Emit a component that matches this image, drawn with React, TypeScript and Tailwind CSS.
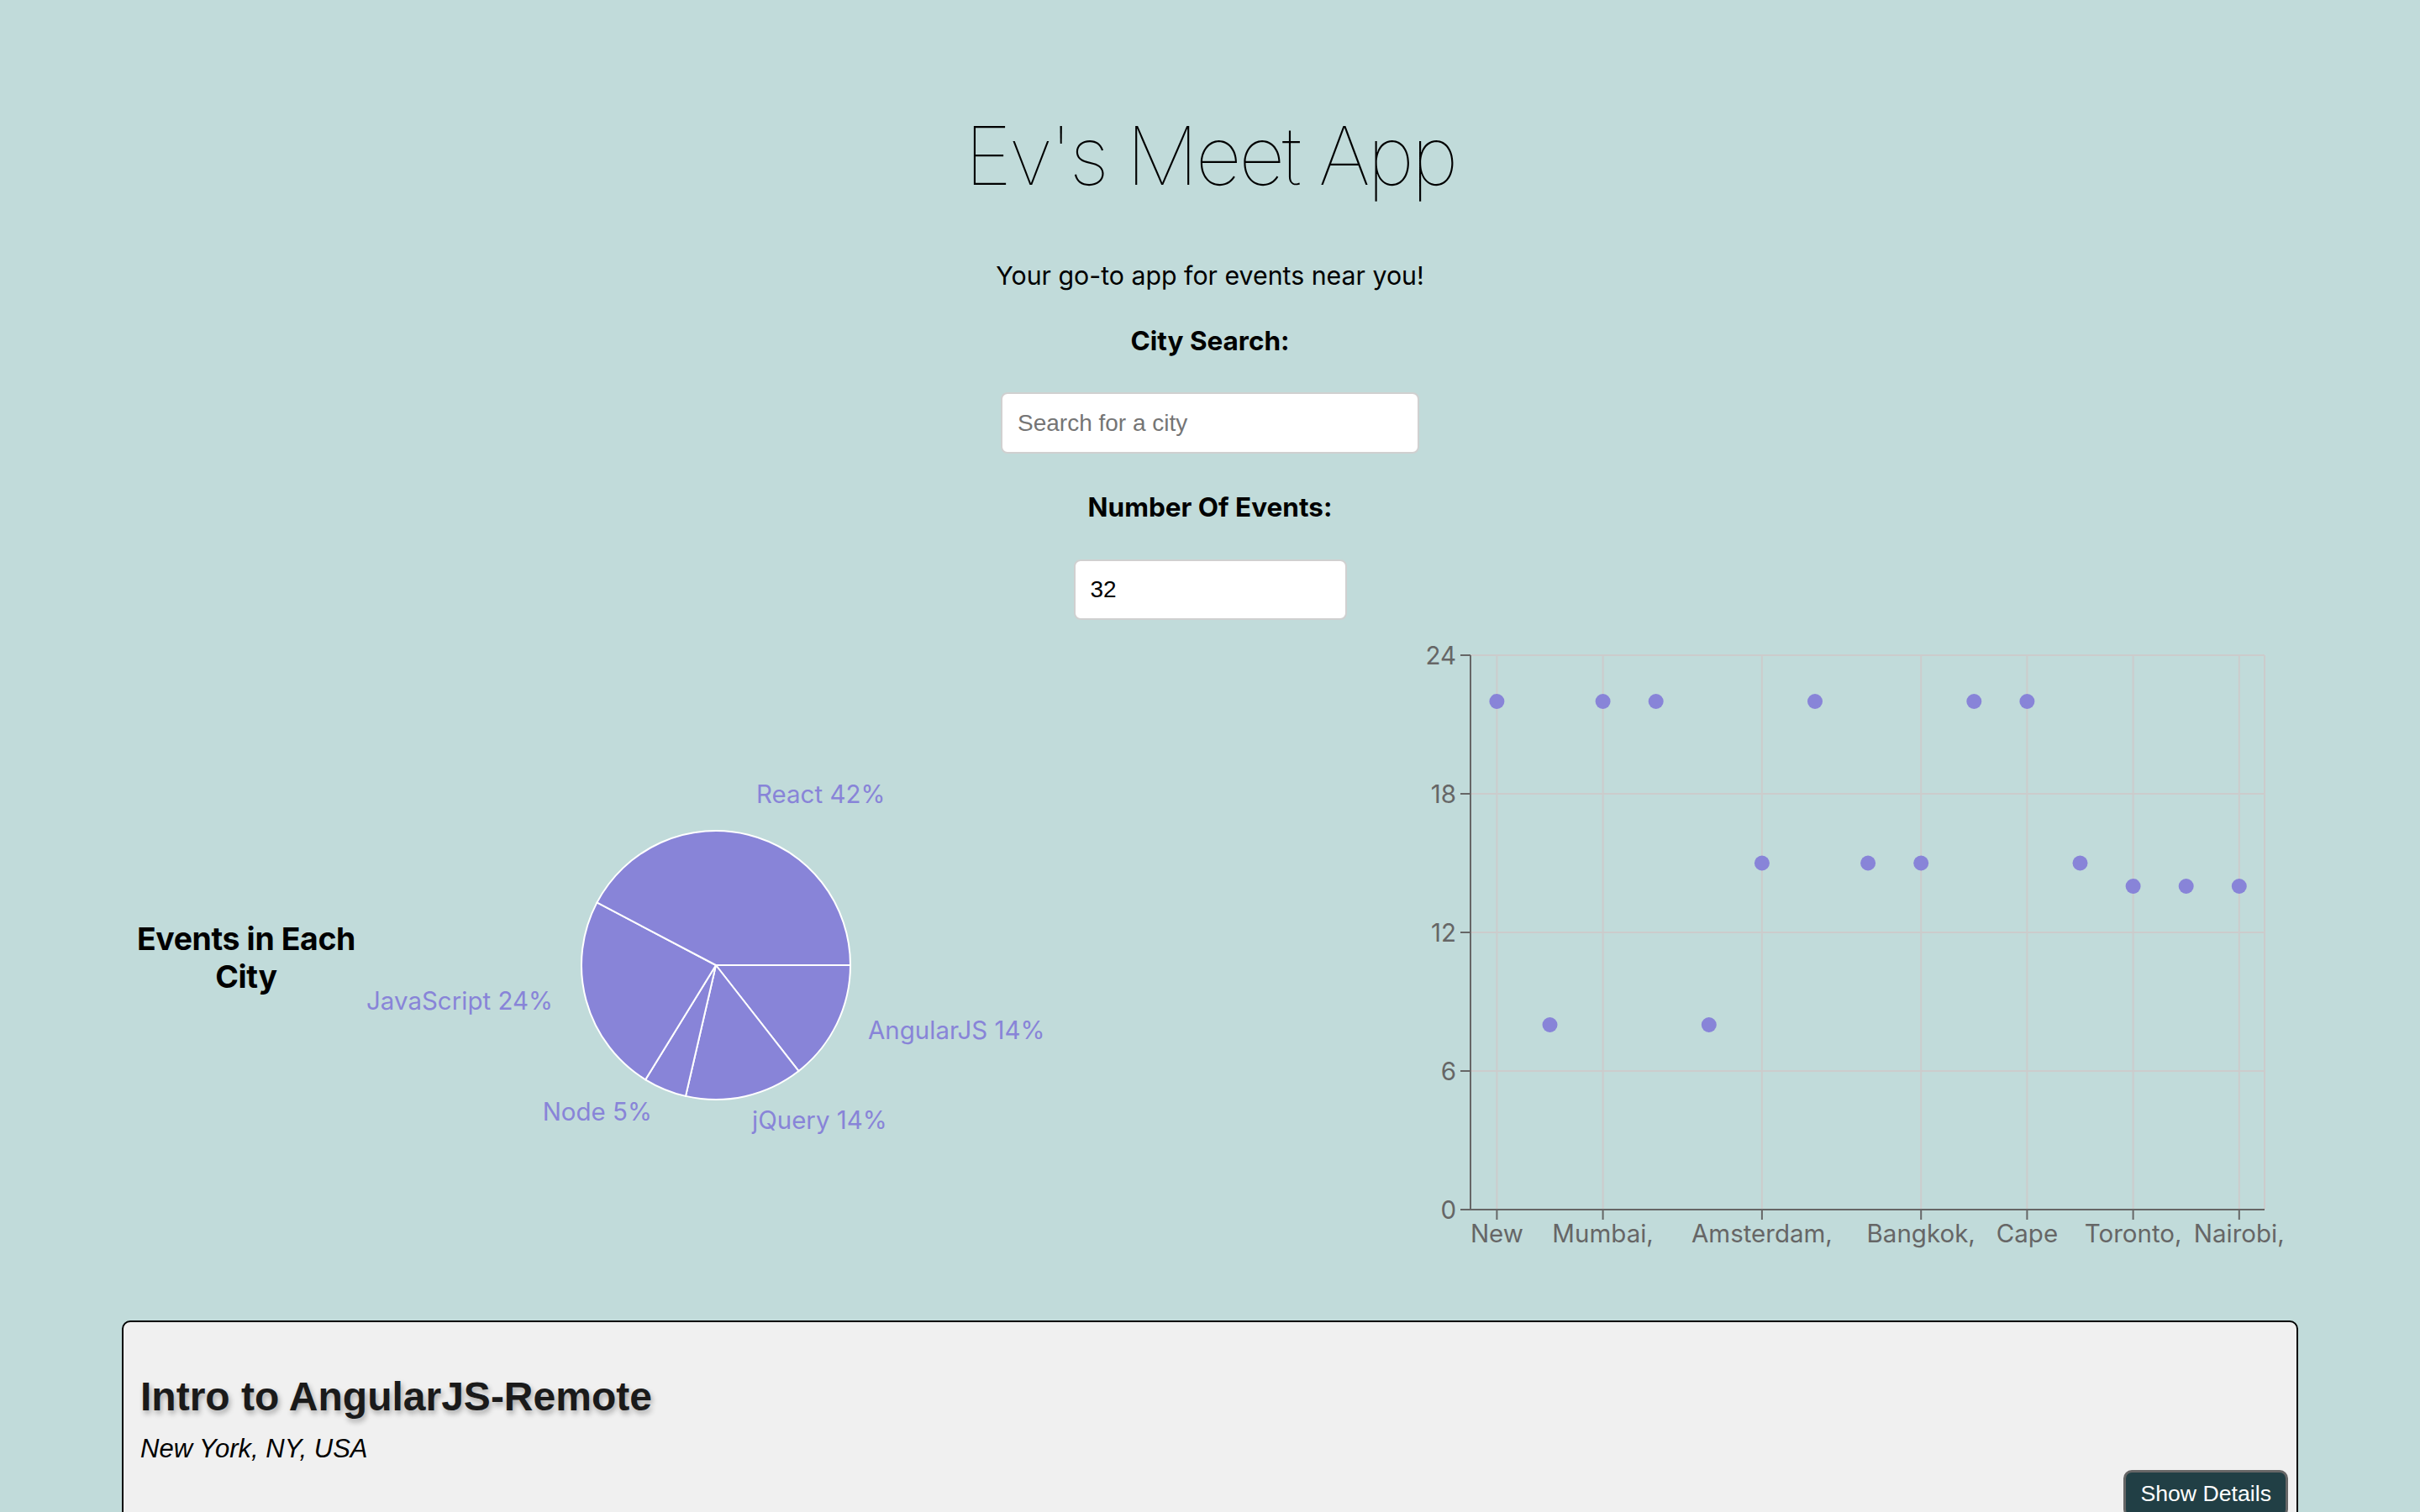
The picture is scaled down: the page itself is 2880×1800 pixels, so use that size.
import React from "react";

const PIE_CX = 411;
const PIE_CY = 389;
const PIE_R = 160;

function pt(a: number, r: number) {
  const rad = (a * Math.PI) / 180;
  return [PIE_CX + r * Math.cos(rad), PIE_CY + r * Math.sin(rad)];
}

function slicePath(a0: number, a1: number) {
  const [x0, y0] = pt(a0, PIE_R);
  const [x1, y1] = pt(a1, PIE_R);
  const large = a1 - a0 > 180 ? 1 : 0;
  return `M ${PIE_CX} ${PIE_CY} L ${x0} ${y0} A ${PIE_R} ${PIE_R} 0 ${large} 1 ${x1} ${y1} Z`;
}

const slices: [number, number][] = [
  [0, 52],
  [52, 103],
  [103, 121.6],
  [121.6, 207.8],
  [207.8, 360],
];

const pieLabels = [
  { text: "React 42%", x: 459, y: 196, anchor: "start" },
  { text: "JavaScript 24%", x: 217, y: 442, anchor: "end" },
  { text: "AngularJS 14%", x: 592, y: 477, anchor: "start" },
  { text: "Node 5%", x: 335, y: 574, anchor: "end" },
  { text: "jQuery 14%", x: 454, y: 584, anchor: "start" },
];

const values = [22, 8, 22, 22, 8, 15, 22, 15, 15, 22, 22, 15, 14, 14, 14];
const xTicks: [number, string][] = [
  [0, "New"],
  [2, "Mumbai,"],
  [5, "Amsterdam,"],
  [8, "Bangkok,"],
  [10, "Cape"],
  [12, "Toronto,"],
  [14, "Nairobi,"],
];

const AX_X = 160;
const TOP = 20;
const BOTTOM = 680;
const RIGHT = 1105;
const px = (i: number) => 191.4 + 63.1 * i;
const py = (v: number) => BOTTOM - (v * (BOTTOM - TOP)) / 24;

function PieChartSvg() {
  return (
    <svg width={1000} height={780} className="shrink-0 overflow-visible">
      {slices.map(([a0, a1], i) => (
        <path key={i} d={slicePath(a0, a1)} fill="#8884d8" stroke="#ffffff" strokeWidth={2} />
      ))}
      {pieLabels.map((l) => (
        <text
          key={l.text}
          x={l.x}
          y={l.y}
          textAnchor={l.anchor as "start" | "end"}
          fill="#8884d8"
          fontSize={29.5}
          fontFamily="Inter, sans-serif"
        >
          {l.text}
        </text>
      ))}
    </svg>
  );
}

function ScatterSvg() {
  const yTicks = [0, 6, 12, 18, 24];
  return (
    <svg width={1145} height={780} className="shrink-0 overflow-visible">
      {yTicks.map((v) => (
        <line key={"h" + v} x1={AX_X} x2={RIGHT} y1={py(v)} y2={py(v)} stroke="#cccccc" strokeWidth={2} />
      ))}
      {xTicks.map(([i]) => (
        <line key={"v" + i} x1={px(i)} x2={px(i)} y1={TOP} y2={BOTTOM} stroke="#cccccc" strokeWidth={2} />
      ))}
      <line x1={RIGHT} x2={RIGHT} y1={TOP} y2={BOTTOM} stroke="#cccccc" strokeWidth={2} />
      <line x1={AX_X} x2={AX_X} y1={TOP} y2={BOTTOM} stroke="#666666" strokeWidth={2} />
      <line x1={AX_X} x2={RIGHT} y1={BOTTOM} y2={BOTTOM} stroke="#666666" strokeWidth={2} />
      {yTicks.map((v) => (
        <g key={"yt" + v}>
          <line x1={AX_X - 12} x2={AX_X} y1={py(v)} y2={py(v)} stroke="#666666" strokeWidth={2} />
          <text
            x={AX_X - 17}
            y={py(v) + 10.5}
            textAnchor="end"
            fill="#666666"
            fontSize={29.5}
            fontFamily="Inter, sans-serif"
          >
            {v}
          </text>
        </g>
      ))}
      {xTicks.map(([i, label]) => (
        <g key={"xt" + i}>
          <line x1={px(i)} x2={px(i)} y1={BOTTOM} y2={BOTTOM + 12} stroke="#666666" strokeWidth={2} />
          <text
            x={px(i)}
            y={719}
            textAnchor="middle"
            fill="#666666"
            fontSize={29.5}
            fontFamily="Inter, sans-serif"
          >
            {label}
          </text>
        </g>
      ))}
      {values.map((v, i) => (
        <circle key={"d" + i} cx={px(i)} cy={py(v)} r={9} fill="#8884d8" />
      ))}
    </svg>
  );
}

export default function App() {
  return (
    <div className="min-h-screen bg-[#c1dbda] font-['Inter',sans-serif] text-black">
      <div className="flex flex-col items-center pt-[127px]">
        <h1 className="text-[96px] leading-[116px] font-thin tracking-[-0.035em]">Ev's Meet App</h1>
        <p className="mt-[67px] text-[30.3px] leading-[36px]">Your go-to app for events near you!</p>
        <h3 className="mt-[41px] text-[31.5px] leading-[38px] font-bold">City Search:</h3>
        <input
          type="text"
          placeholder="Search for a city"
          className="mt-[42px] h-[73px] w-[498px] rounded-[8px] border-2 border-[#d0d0d0] bg-white pl-[18px] font-['Liberation_Sans',Arial,sans-serif] text-[28px] text-black outline-none placeholder:text-[#757575]"
        />
        <h3 className="mt-[45px] text-[31.5px] leading-[38px] font-bold">Number Of Events:</h3>
        <input
          type="text"
          defaultValue="32"
          className="mt-[43px] h-[72px] w-[325px] rounded-[8px] border-2 border-[#d0d0d0] bg-white pl-[18px] font-['Liberation_Sans',Arial,sans-serif] text-[28px] text-black outline-none"
        />
      </div>

      <div className="mt-[22px] flex h-[780px] items-center justify-between px-[145px]">
        <div className="flex items-center">
          <div className="w-[296px] pb-[20px] text-center">
            <h3 className="text-[37.4px] leading-[45px] font-bold tracking-[-0.01em]">Events in Each City</h3>
          </div>
          <PieChartSvg />
        </div>
        <ScatterSvg />
      </div>

      <div className="mx-[145px] mt-[32px] rounded-[10px] border-2 border-black bg-[#f0f0f0] pb-[40px] pl-[20px] pr-[10px] pt-[61px] font-['Liberation_Sans',Arial,sans-serif]">
        <h2 className="text-[48px] leading-[55px] font-bold text-[#1a1a1a] [text-shadow:2px_4px_6px_rgba(0,0,0,0.3)]">
          Intro to AngularJS-Remote
        </h2>
        <p className="mt-[17px] text-[31px] leading-[36px] italic">New York, NY, USA</p>
        <div className="mt-[7px] flex justify-end">
          <button className="rounded-[10px] border-[3px] border-[#666666] bg-[#213f45] px-[17px] pb-[10px] pt-[10px] text-[26.67px] leading-[31px] text-white">
            Show Details
          </button>
        </div>
      </div>
    </div>
  );
}
